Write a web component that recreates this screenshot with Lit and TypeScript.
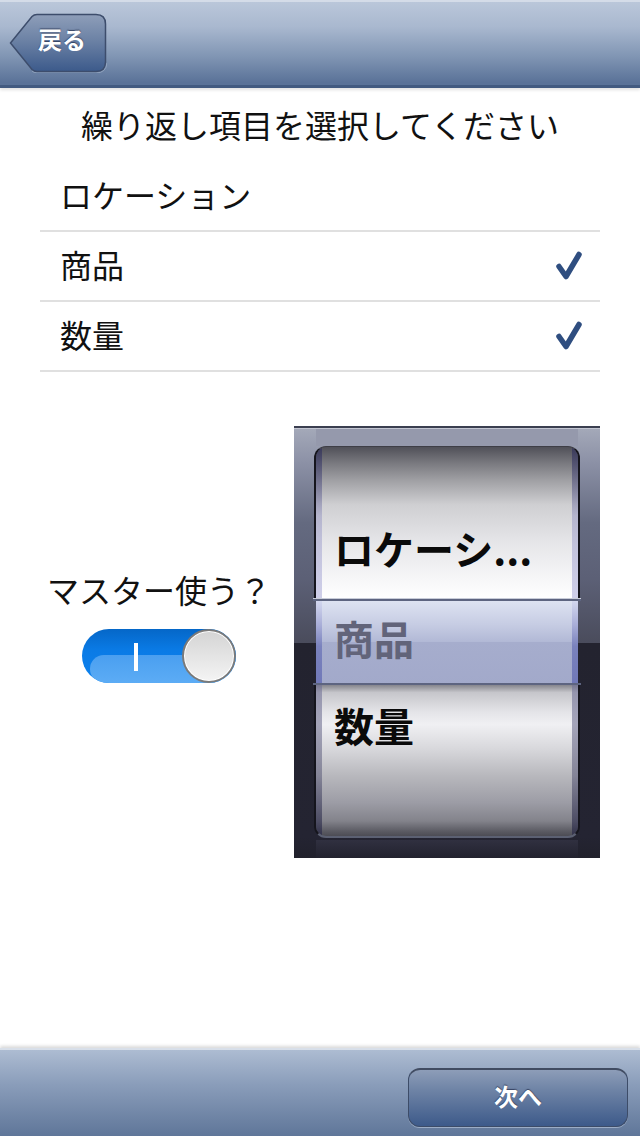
import { LitElement, html, css, svg } from "lit";
import { customElement, state } from "lit/decorators.js";

const FONT = css`"Noto Sans CJK JP", "Noto Sans CJK SC", "Liberation Sans", sans-serif`;

@customElement("app-root")
export class AppRoot extends LitElement {
  @state() items = [
    { label: "ロケーション", checked: false },
    { label: "商品", checked: true },
    { label: "数量", checked: true },
  ];

  static styles = css`
    :host {
      display: flex;
      flex-direction: column;
      width: 640px;
      height: 1136px;
      overflow: hidden;
      background: #fff;
      color: #111;
      font-family: ${FONT};
    }
    .header {
      box-sizing: border-box;
      height: 88px;
      flex: none;
      padding: 11px 0 0 9px;
      background: linear-gradient(#bac7da 0, #a9b8cf 30%, #8196b4 65%, #5a7298 97%);
      border-top: 2px solid #d4dce8;
      border-bottom: 3px solid #425a80;
      box-shadow: 0 2px 3px rgba(0, 0, 0, 0.12);
    }
    .back {
      position: relative;
      width: 98px;
      height: 60px;
      color: #fff;
      font-size: 24px;
      font-weight: 700;
    }
    .back svg { position: absolute; left: 0; top: 0; }
    .back span {
      position: absolute;
      left: 29px;
      top: 8px;
      line-height: 36px;
      text-shadow: 0 -1px 1px rgba(30, 40, 70, 0.7);
    }
    .title {
      margin: 0;
      padding-top: 15px;
      height: 60px;
      font-size: 32px;
      font-weight: 400;
      line-height: 42px;
      text-align: center;
    }
    .list {
      margin: -1px 40px 0;
      padding: 0;
      list-style: none;
    }
    .row {
      box-sizing: border-box;
      height: 70px;
      display: flex;
      align-items: center;
      justify-content: space-between;
      padding: 0 16px 5px 20px;
      border-bottom: 2px solid #e0e0e0;
      font-size: 32px;
    }
    .row svg { display: block; }
    .lower {
      display: flex;
      margin: 54px 40px 0 0;
      align-items: stretch;
    }
    .master {
      box-sizing: border-box;
      width: 272px;
      margin-right: 22px;
      padding-left: 46px;
      padding-bottom: 34px;
      flex: none;
      display: flex;
      flex-direction: column;
      align-items: center;
      justify-content: center;
      gap: 18px;
    }
    .master-label {
      font-size: 32px;
      line-height: 44px;
      white-space: nowrap;
    }
    .switch {
      position: relative;
      box-sizing: border-box;
      width: 154px;
      height: 54px;
      border-radius: 27px;
      overflow: hidden;
      background: linear-gradient(#0567c8 0, #0a7be6 40%, #0d82ee 100%);
    }
    .switch .gloss {
      position: absolute;
      left: 8px;
      right: 0;
      top: 26px;
      bottom: 0;
      border-radius: 20px 0 0 20px;
      background: linear-gradient(#4a9ff0, #5cacf5);
    }
    .switch .bar {
      position: absolute;
      left: 52px;
      top: 14px;
      width: 4px;
      height: 28px;
      background: #fff;
    }
    .switch .knob {
      position: absolute;
      right: 0;
      top: 0;
      box-sizing: border-box;
      width: 54px;
      height: 54px;
      border-radius: 50%;
      border: 2px solid #7a7a7a;
      background: linear-gradient(#d4d4d4, #f4f4f4);
      box-shadow: inset 0 0 0 1px #fff;
    }
    .picker {
      position: relative;
      box-sizing: border-box;
      width: 306px;
      height: 432px;
      flex: none;
      padding: 20px;
      border-top: 2px solid #3b3f50;
      box-shadow: inset 0 1px 0 #c3c6d2;
      background: linear-gradient(
        #a4a9b9 0,
        #8c91a6 8%,
        #646a80 22%,
        #5c6076 35%,
        #4a4c5c 50%,
        #474858 50%,
        #23232f 50.1%,
        #242432 95%,
        #21212c 100%
      );
    }
    .picker .cap-top, .picker .cap-bottom {
      position: absolute;
      left: 22px;
      right: 22px;
    }
    .picker .cap-top { top: 1px; height: 17px; background: #9599ac; }
    .picker .cap-bottom { bottom: 0; height: 18px; background: linear-gradient(#303040, #22222e); }
    .wheel {
      position: relative;
      box-sizing: border-box;
      height: 392px;
      margin-top: -2px;
      display: flex;
      flex-direction: column;
      font-size: 40px;
      font-weight: 700;
      color: #0a0a0a;
    }
    .drum {
      box-sizing: border-box;
      border: solid #15151d;
      border-width: 0 2px;
      padding-left: 18px;
      display: flex;
      position: relative;
      overflow: hidden;
    }
    .drum.top {
      height: 153px;
      align-items: flex-end;
      padding-bottom: 22px;
      border-top: 1px solid #3e3e46;
      border-radius: 12px 12px 0 0;
      background: linear-gradient(#505058 0, #77777d 10%, #a0a0a4 22%, #cfcfd2 38%, #e5e5e8 62%, #fafafb 92%, #fff 100%);
    }
    .drum.bottom {
      height: 153px;
      padding-top: 11px;
      align-items: flex-start;
      border-bottom: 2px solid #5b6072;
      border-radius: 0 0 12px 12px;
      background: linear-gradient(#85858c 0, #c6c6cb 5%, #e4e4e8 18%, #f0f0f3 26%, #d8d8dc 42%, #b8b8bd 60%, #9c9ca5 78%, #83838b 90%, #5a5a62 97%, #4c4c54 100%);
    }
    .drum::before, .drum::after {
      content: "";
      position: absolute;
      top: 0;
      bottom: 0;
      width: 6px;
    }
    .drum::before { left: 0; }
    .drum::after { right: 0; }
    .drum.top::before, .drum.top::after {
      background: linear-gradient(rgba(50, 50, 90, 0.75), rgba(140, 140, 190, 0.45) 45%, rgba(190, 190, 225, 0.75));
    }
    .drum.bottom::before, .drum.bottom::after {
      background: linear-gradient(rgba(110, 110, 150, 0.55), rgba(90, 90, 120, 0.55) 60%, rgba(40, 40, 70, 0.7));
    }
    .band {
      position: relative;
      box-sizing: border-box;
      height: 86px;
      margin: 0 2px;
      padding: 0 0 8px 18px;
      display: flex;
      align-items: center;
      color: #62647a;
      background: linear-gradient(#dfe4f3 0, #c6cce3 30%, #b2b9d6 49.5%, #a6adcd 50%, #a2a9ca 100%);
    }
    .band::before, .band::after {
      content: "";
      position: absolute;
      top: 0;
      bottom: 0;
      width: 6px;
      background: linear-gradient(#d6daf0 0, #a9aed8 30%, #7a82bd 55%, #7078b8 100%);
    }
    .band::before { left: 0; }
    .band::after { right: 0; }
    .band .line {
      position: absolute;
      left: -3px;
      right: -3px;
      height: 2px;
      background: #5d6480;
      z-index: 1;
    }
    .band .line.hi { top: 0; box-shadow: 0 -1px 0 #c8ccd8; }
    .band .line.lo { bottom: 0; }
    .footer {
      margin-top: auto;
      box-sizing: border-box;
      height: 88px;
      flex: none;
      display: flex;
      justify-content: flex-end;
      padding: 18px 12px 0 0;
      background: linear-gradient(#adbcd2 0, #8a9dba 40%, #5f7699 100%);
      border-top: 2px solid #d8dfe9;
      box-shadow: 0 -2px 3px rgba(0, 0, 0, 0.15);
    }
    .next {
      box-sizing: border-box;
      width: 220px;
      height: 59px;
      padding-bottom: 6px;
      display: flex;
      align-items: center;
      justify-content: center;
      border-radius: 12px;
      color: #fff;
      font-size: 24px;
      font-weight: 700;
      border: 1px solid #3d4c68;
      border-top: 2px solid #414c62;
      background: linear-gradient(#8d9db8 0, #6f84a6 35%, #3d5a8a 100%);
      box-shadow: 0 1px 0 rgba(210, 222, 238, 0.5);
      text-shadow: 0 -1px 1px rgba(30, 40, 70, 0.7);
    }
  `;

  private check() {
    return html`<svg width="32" height="34" viewBox="0 0 32 34" fill="none">
      ${svg`<path d="M7 19.500 L14 29.500 L27 7.500" stroke="#2f4e80" stroke-width="5.500" stroke-linecap="round" stroke-linejoin="round"/>`}
    </svg>`;
  }

  render() {
    return html`
      <header class="header">
        <div class="back">
          <svg width="98" height="60" viewBox="0 0 98 60">
            <defs>
              <linearGradient id="bk" x1="0" y1="0" x2="0" y2="1">
                <stop offset="0" stop-color="#8e9eb9" />
                <stop offset="0.45" stop-color="#6c82a5" />
                <stop offset="1" stop-color="#3c5a8b" />
              </linearGradient>
            </defs>
            <path d="M1.500 30 L23 3.500 Q25 1.500 28 1.500 L87 1.500 Q96.500 1.500 96.500 11 L96.500 49 Q96.500 58.500 87 58.500 L28 58.500 Q25 58.500 23 56.500 Z"
              fill="url(#bk)" stroke="#3d4d6c" stroke-width="1.500" />
            <path d="M23 58 Q25 60 28 60 L87 60 Q97 60 98 50" fill="none" stroke="#a9b7cd" stroke-opacity="0.6" />
          </svg>
          <span>戻る</span>
        </div>
      </header>
      <h1 class="title">繰り返し項目を選択してください</h1>
      <ul class="list">
        ${this.items.map(
          (i) => html`<li class="row"><span>${i.label}</span>${i.checked ? this.check() : ""}</li>`
        )}
      </ul>
      <section class="lower">
        <div class="master">
          <div class="master-label">マスター使う？</div>
          <div class="switch">
            <div class="gloss"></div>
            <div class="bar"></div>
            <div class="knob"></div>
          </div>
        </div>
        <div class="picker">
          <div class="cap-top"></div>
          <div class="cap-bottom"></div>
          <div class="wheel">
            <div class="drum top"><span>ロケーシ...</span></div>
            <div class="band"><div class="line hi"></div><span>商品</span><div class="line lo"></div></div>
            <div class="drum bottom"><span>数量</span></div>
          </div>
        </div>
      </section>
      <footer class="footer">
        <div class="next">次へ</div>
      </footer>
    `;
  }
}
